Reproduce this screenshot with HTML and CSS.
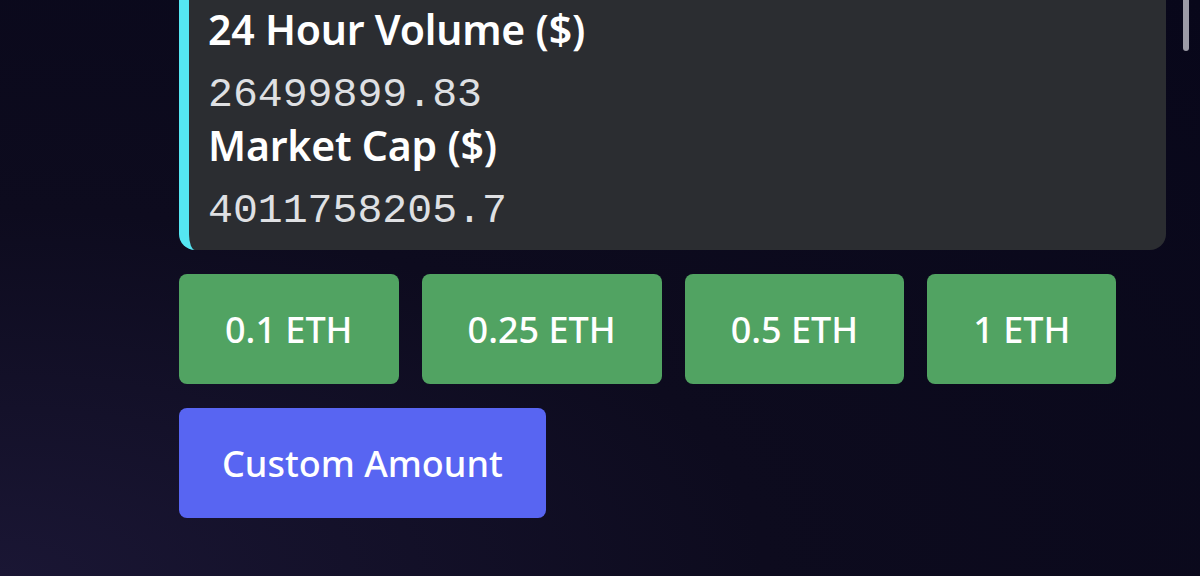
FILE: index.html
```
<!DOCTYPE html>
<html>
<head>
  <title>Token Stats</title>
  <link rel="stylesheet" href="styles.css">
</head>
<body>

<div class="scrollbar"></div>

<div class="message">
  <div class="embed">
    <div class="field">
      <div class="field-name">24 Hour Volume ($)</div>
      <div class="field-value">26499899.83</div>
    </div>
    <div class="field">
      <div class="field-name">Market Cap ($)</div>
      <div class="field-value">4011758205.7</div>
    </div>
  </div>

  <div class="button-row">
    <button class="btn green">0.1 ETH</button>
    <button class="btn green">0.25 ETH</button>
    <button class="btn green">0.5 ETH</button>
    <button class="btn green">1 ETH</button>
  </div>
  <div class="button-row">
    <button class="btn blurple">Custom Amount</button>
  </div>
</div>

</body>
</html>
```
FILE: styles.css
```
html, body {
  height: 100%;
}
body {
  margin: 0;
  overflow: hidden;
  font-family: "Noto Sans", Arial, sans-serif;
  background: radial-gradient(ellipse at 0% 100%, #1a1634 0%, #0d0b1e 45%, #08071a 100%);
  color: #fff;
}
.scrollbar {
  position: absolute;
  top: -10px;
  left: 1183px;
  width: 6px;
  height: 61px;
  border-radius: 3px;
  background: #9c9ba6;
}
.message {
  padding-left: 179px;
}
.embed {
  box-sizing: border-box;
  width: 987px;
  background: #2b2d31;
  border-left: 10px solid #55e6f2;
  border-radius: 0 0 16px 16px;
  padding: 4px 0 14px 19px;
}
.field-name {
  font-size: 41px;
  font-weight: 600;
  line-height: 50px;
  color: #fff;
  letter-spacing: -0.2px;
}
.field-value {
  font-family: "Liberation Mono", "DejaVu Sans Mono", monospace;
  font-size: 41.5px;
  line-height: 50px;
  margin-top: 16px;
  color: #dfe0e3;
}
.button-row {
  display: flex;
  gap: 23px;
  margin-top: 24px;
}
.btn {
  height: 110px;
  border: none;
  border-radius: 8px;
  color: #fff;
  font-family: "Noto Sans", Arial, sans-serif;
  font-size: 36px;
  font-weight: 500;
  padding: 0 46px;
  cursor: pointer;
}
.green {
  background: #51a362;
}
.blurple {
  background: #5865f2;
  padding: 0 43px;
}
```
